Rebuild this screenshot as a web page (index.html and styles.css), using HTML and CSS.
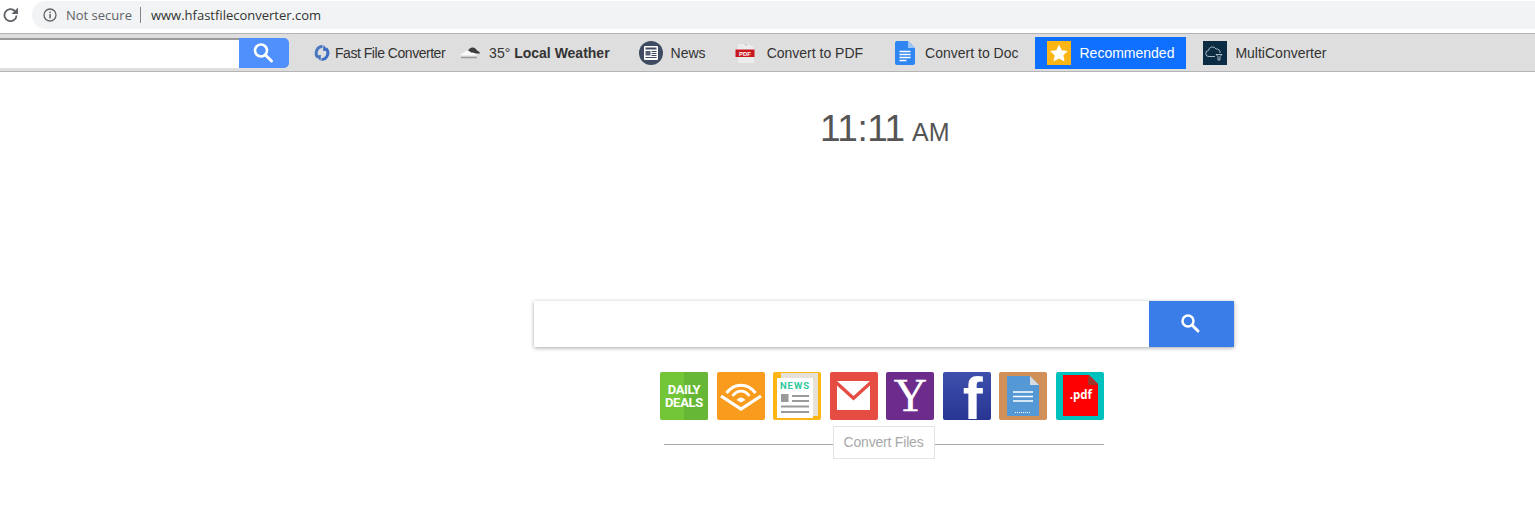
FILE: index.html
```html
<!DOCTYPE html>
<html lang="en">
<head>
    <meta charset="UTF-8">
    <title>Fast File Converter</title>
    <link rel="stylesheet" href="styles.css">
</head>
<body>
    <!-- Browser address bar -->
    <div class="address-row">
        <svg class="reload" width="16" height="16" viewBox="0 0 16 16"><path d="M13.500 8.500a6 6 0 1 1-1.700-4.500" fill="none" stroke="#5f6368" stroke-width="1.800"/><path d="M15 0.500v6.500H8.500z" fill="#5f6368"/></svg>
        <div class="address-pill">
            <svg class="info" width="14" height="14" viewBox="0 0 14 14"><circle cx="7" cy="7" r="6" fill="none" stroke="#5f6368" stroke-width="1.300"/><rect x="6.300" y="6" width="1.500" height="4.400" fill="#5f6368"/><rect x="6.300" y="3.600" width="1.500" height="1.500" fill="#5f6368"/></svg>
            <span class="not-secure">Not secure</span>
            <span class="address-divider"></span>
            <span class="url">www.hfastfileconverter.com</span>
        </div>
    </div>

    <!-- Extension toolbar -->
    <div class="toolbar">
        <div class="tool-search">
            <div class="tool-input"></div>
            <div class="tool-button">
                <svg width="22" height="22" viewBox="0 0 22 22"><circle cx="8" cy="8.500" r="6" fill="none" stroke="#fff" stroke-width="2.600"/><path d="M12.500 13l6 6" stroke="#fff" stroke-width="3" stroke-linecap="round"/></svg>
            </div>
        </div>
        <a class="tool-item item-fast">
            <svg width="18" height="18" viewBox="0 0 18 18"><path d="M9.500 2.500A6.500 6.500 0 0 0 5 13.500" fill="none" stroke="#4a77bd" stroke-width="3"/><path d="M2.500 11.500l5 5.500 .5-6z" fill="#4a77bd"/><path d="M8.500 15.500A6.500 6.500 0 0 0 13 4.500" fill="none" stroke="#3c6fc4" stroke-width="3"/><path d="M15.500 6.500l-5-5.500-.5 6z" fill="#3c6fc4"/></svg>
            <span class="text-fast">Fast File Converter</span>
        </a>
        <a class="tool-item item-weather">
            <svg width="22" height="16" viewBox="0 0 22 16"><path d="M9 6c1-2.500 3-4 5-3.500 2 0 3 1.500 4 3 1.500.500 3 1.500 3 3H10z" fill="#3d3d3d"/><path d="M1 10.500c1-2 3-2.500 4-2.500 1-2.500 5-3 7-.5 2-.5 5 .5 6 3z" fill="#fafafa"/><path d="M2 12.500h16" stroke="#9a9a9a" stroke-width="1.500"/></svg>
            <span>35° <b>Local Weather</b></span>
        </a>
        <a class="tool-item item-news">
            <svg width="24" height="24" viewBox="0 0 24 24"><circle cx="12" cy="12" r="12" fill="#3f4a63"/><rect x="5" y="5" width="14" height="14" rx="1" fill="#fff"/><rect x="6.500" y="6.500" width="11" height="2" fill="#3f4a63"/><rect x="6.500" y="10" width="5" height="4.500" fill="#555e72"/><path d="M12.500 10.500h5M12.500 12.500h5M12.500 14.500h5M6.500 16.500h11" stroke="#3f4a63"/></svg>
            <span>News</span>
        </a>
        <a class="tool-item item-pdf">
            <svg width="22" height="22" viewBox="0 0 22 22"><path d="M3 2h11l5 4v15H3z" fill="#ececec"/><path d="M9 2l2 2 2-2z" fill="#c8c8c8"/><rect x="0.500" y="7.500" width="19" height="7.500" fill="#c9171e"/><text x="10" y="13.500" class="pdf-mini">PDF</text></svg>
            <span>Convert to PDF</span>
        </a>
        <a class="tool-item item-doc">
            <svg width="20" height="24" viewBox="0 0 20 24"><path d="M2 0h11l7 7v15a2 2 0 0 1-2 2H2a2 2 0 0 1-2-2V2a2 2 0 0 1 2-2z" fill="#2f86f2"/><path d="M13 0l7 7h-7z" fill="#9cc5f8"/><path d="M4.500 10.500h11M4.500 13.500h11M4.500 16.500h11M4.500 19.500h7" stroke="#fff" stroke-width="1.300"/></svg>
            <span>Convert to Doc</span>
        </a>
        <a class="tool-item item-recommended">
            <svg width="24" height="24" viewBox="0 0 24 24"><rect width="24" height="24" fill="#fbb615"/><path d="M12 3.500l2.700 5.700 6.200.8-4.500 4.300 1.100 6.200-5.500-3-5.500 3 1.100-6.200L3.100 10l6.200-.8z" fill="#fff"/></svg>
            <span>Recommended</span>
        </a>
        <a class="tool-item item-multi">
            <svg width="24" height="24" viewBox="0 0 24 24"><rect width="24" height="24" fill="#0c2c44"/><path d="M12 15.500H6a3 3 0 0 1-.5-6 4 4 0 0 1 7.500-1.500 3.500 3.500 0 0 1 4 4" fill="none" stroke="#a9b8c2"/><path d="M13 13.500h6l-2 2v3.500h-2v-3.500z" fill="none" stroke="#a9b8c2"/></svg>
            <span>MultiConverter</span>
        </a>
    </div>

    <div class="page">
        <!-- Clock -->
        <div class="clock"><span class="clock-time">11:11</span> <span class="clock-ampm">AM</span></div>

        <!-- Main search -->
        <div class="search-area">
            <div class="search-box">
                <div class="search-input"></div>
                <div class="search-button">
                    <svg width="22" height="22" viewBox="0 0 22 22"><circle cx="7" cy="8" r="5.500" fill="none" stroke="#fff" stroke-width="2.500"/><path d="M11.500 12.500l5.500 5.500" stroke="#fff" stroke-width="3" stroke-linecap="round"/></svg>
                </div>
            </div>

            <!-- Shortcut tiles -->
            <div class="tiles">
                <div class="tile tile-deals"><span class="deals-shade"></span><span class="deals-text">DAILY<br>DEALS</span></div>
                <div class="tile tile-audible">
                    <svg width="48" height="48" viewBox="0 0 48 48"><path d="M4 24l20 13 20-13" fill="none" stroke="#fff" stroke-width="3.200"/><path d="M9.500 21c8-10.500 21-10.500 29 0" fill="none" stroke="#fff" stroke-width="3"/><path d="M15.500 24c5-6.500 12-6.500 17 0" fill="none" stroke="#fff" stroke-width="2.800"/><path d="M19.500 28c3-3.500 6-3.500 9 0l-4.500 2.500z" fill="#fff"/></svg>
                </div>
                <div class="tile tile-news">
                    <svg width="48" height="48" viewBox="0 0 48 48"><rect x="8" y="1" width="37" height="43" fill="#e6e2da"/><rect x="4" y="6" width="36" height="40" fill="#fff"/><text x="22" y="17" class="news-mini">NEWS</text><rect x="8" y="22" width="7.500" height="8" fill="#999"/><path d="M19 24h17M19 29h17M8 34.500h28M8 40h28" stroke="#999" stroke-width="2"/></svg>
                </div>
                <div class="tile tile-mail">
                    <svg width="48" height="48" viewBox="0 0 48 48"><path d="M7 9h33L23.500 24z" fill="#fff"/><path d="M7 13.500l16.500 15 16.500-15V38H7z" fill="#fff"/></svg>
                </div>
                <div class="tile tile-yahoo"><span class="yahoo-y">Y</span></div>
                <div class="tile tile-facebook"><span class="fb-f">f</span></div>
                <div class="tile tile-file">
                    <svg width="48" height="48" viewBox="0 0 48 48"><path d="M8 4h23l9 9v31H8z" fill="#5499d6"/><path d="M31 4l9 9h-9z" fill="#d9dde2"/><path d="M14 20h20M14 24.500h20M14 29h20" stroke="#fff" stroke-width="1.500"/><path d="M16 40.500h16" stroke="#fff" stroke-dasharray="1 1"/></svg>
                </div>
                <div class="tile tile-pdf">
                    <svg width="48" height="48" viewBox="0 0 48 48"><path d="M7 3h26l9 9v32H7z" fill="#fe0000"/><path d="M32 3l10 10H32z" fill="#a0352e"/></svg>
                    <span class="pdf-label">.pdf</span>
                </div>
            </div>

            <!-- Divider with label -->
            <div class="convert-row">
                <span class="convert-label">Convert Files</span>
            </div>
        </div>
    </div>
</body>
</html>
```

FILE: styles.css
```css
html, body {
    margin: 0;
    padding: 0;
    background: #fff;
    overflow: hidden;
}
body {
    font-family: "Liberation Sans", Arial, sans-serif;
    color: #333;
    width: 1535px;
    height: 523px;
}

/* address bar */
.address-row {
    display: flex;
    align-items: center;
    height: 33px;
    box-sizing: border-box;
    padding-bottom: 3px;
}
.reload {
    margin-left: 3px;
    width: 16px;
}
.address-pill {
    flex: 1;
    display: flex;
    align-items: center;
    height: 28px;
    margin-left: 13px;
    padding-left: 11px;
    background: #f1f3f4;
    border-radius: 14px 0 0 14px;
    font-family: "Open Sans", sans-serif;
    font-size: 13px;
}
.not-secure {
    margin-left: 9px;
    color: #5f6368;
}
.address-divider {
    width: 1px;
    height: 16px;
    margin: 0 10px 0 8px;
    background: #80868b;
}
.url {
    color: #333;
}

/* toolbar */
.toolbar {
    display: flex;
    align-items: center;
    height: 39px;
    box-sizing: border-box;
    background: #dedede;
    border-top: 1px solid #b4b4b4;
    border-bottom: 1px solid #b4b4b4;
    font-size: 14px;
    color: #333;
}
.tool-search {
    display: flex;
    height: 30px;
    width: 289px;
}
.tool-input {
    width: 239px;
    background: #fff;
    border-top: 2px solid #9a9a9a;
    box-sizing: border-box;
}
.tool-button {
    width: 50px;
    display: flex;
    align-items: center;
    justify-content: center;
    background: #4f90fd;
    border-radius: 0 5px 5px 0;
}
.tool-item {
    display: flex;
    align-items: center;
}
.item-fast { margin-left: 24px; gap: 4px; }
.text-fast { letter-spacing: -0.47px; }
.item-weather { margin-left: 14px; gap: 8px; }
.item-news { margin-left: 29px; gap: 8px; }
.item-pdf { margin-left: 29px; gap: 10px; }
.item-doc { margin-left: 32px; gap: 10px; }
.item-recommended {
    margin-left: 17px;
    gap: 8px;
    height: 32px;
    padding: 0 12px;
    background: #0f6fff;
    color: #fff;
}
.item-multi { margin-left: 17px; gap: 8px; }
.pdf-mini {
    font-size: 6px;
    font-weight: bold;
    fill: #fff;
    text-anchor: middle;
}

/* clock */
.clock {
    height: 229px;
    padding: 32px 0 0 820px;
    box-sizing: border-box;
    line-height: 50px;
    color: #555;
    white-space: nowrap;
}
.clock-time {
    font-size: 37px;
    letter-spacing: -0.5px;
}
.clock-ampm {
    font-size: 25px;
    margin-left: 3px;
}

/* main search */
.search-area {
    width: 700px;
    margin-left: 534px;
}
.search-box {
    display: flex;
    height: 46px;
    background: #fff;
    box-shadow: 0 1px 4px rgba(0, 0, 0, 0.35);
}
.search-input {
    flex: 1;
}
.search-button {
    width: 85px;
    display: flex;
    align-items: center;
    justify-content: center;
    background: #3a7de8;
}

/* shortcut tiles */
.tiles {
    display: flex;
    justify-content: space-between;
    margin: 25px 130px 0 126px;
}
.tile {
    position: relative;
    width: 48px;
    height: 48px;
    border-radius: 2px;
}
.tile svg {
    display: block;
}
.tile-deals { background: #72c637; }
.deals-shade {
    position: absolute;
    top: 0;
    right: 0;
    bottom: 0;
    width: 24px;
    background: #66b735;
    border-radius: 0 2px 2px 0;
}
.deals-text {
    position: absolute;
    top: 11px;
    left: 0;
    right: 0;
    text-align: center;
    color: #fff;
    font-family: Roboto, sans-serif;
    font-size: 13px;
    font-weight: bold;
    letter-spacing: -0.3px;
    line-height: 13px;
}
.tile-audible { background: #f99b1c; }
.tile-news { background: #fdb515; }
.news-mini {
    font-family: Roboto, sans-serif;
    font-size: 9.500px;
    font-weight: bold;
    letter-spacing: 1px;
    fill: #2dc79d;
    text-anchor: middle;
}
.tile-mail { background: #e54c42; }
.tile-yahoo {
    background: #6d2b8c;
    text-align: center;
}
.yahoo-y {
    font-family: "Liberation Serif", serif;
    font-size: 46px;
    line-height: 48px;
    color: #fff;
    -webkit-text-stroke: 0.4px #fff;
}
.tile-facebook {
    background: linear-gradient(#3e4fac, #283593);
}
.fb-f {
    position: absolute;
    left: 20px;
    top: -3px;
    font-family: "Liberation Sans", sans-serif;
    font-weight: bold;
    font-size: 60px;
    line-height: 60px;
    color: #fff;
}
.tile-file { background: #d19058; }
.tile-pdf { background: #00c1bb; }
.pdf-label {
    position: absolute;
    top: 15px;
    left: 0;
    right: 0;
    padding-left: 2px;
    text-align: center;
    color: #fff;
    font-family: "Open Sans", sans-serif;
    font-size: 11.500px;
    font-weight: bold;
    line-height: 16px;
}

/* divider with label */
.convert-row {
    display: flex;
    justify-content: center;
    margin: 6px 130px 0;
    height: 33px;
    background: linear-gradient(#aaa, #aaa) 0 18px / 100% 1px no-repeat;
}
.convert-label {
    padding: 0 11px 0 10px;
    height: 31px;
    line-height: 31px;
    background: #fff;
    border: 1px solid #e8e2e2;
    font-size: 14px;
    letter-spacing: -0.2px;
    color: #a9a9a9;
}
```
